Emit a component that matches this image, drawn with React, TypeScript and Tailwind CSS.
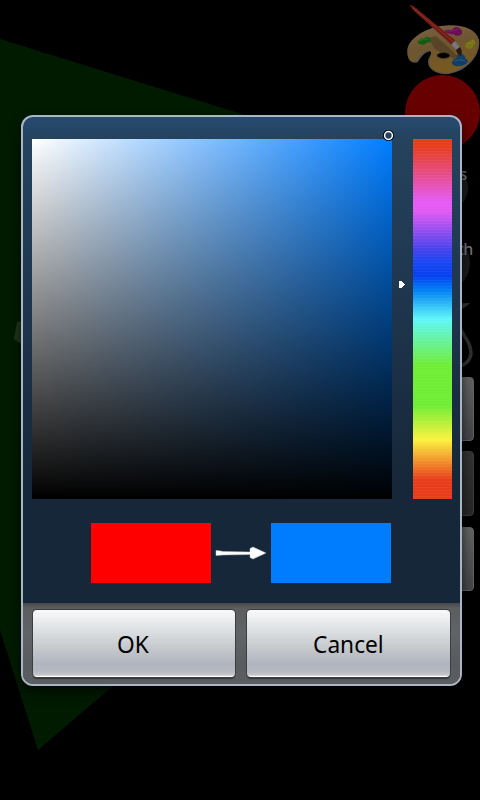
import React from 'react';

function PaletteIcon() {
  return (
    <svg className="block h-[75px] w-[75px]" viewBox="0 0 75 75">
      <defs>
        <linearGradient id="wood" x1="0" y1="0" x2="0.3" y2="1">
          <stop offset="0" stopColor="#7a6441" />
          <stop offset="0.5" stopColor="#6d5531" />
          <stop offset="1" stopColor="#79591f" />
        </linearGradient>
      </defs>
      <path d="M2.5 52 C2 43 14 30 36 26.500 C54 24 71 29 74 40 C76 52 66 70 44 74 C33 75 23 70 23 62 C23 58 27 54 26 52 C23 50 17 55 13 62 C9 64 2 62 2.500 52 Z" fill="#56534a" />
      <path d="M2.500 51 C2 42 14 30 36 26 C54 23 71 28 73.500 39 C75 51 65 67 45 72.500 C35 74 24.500 70 24.500 62 C24 58 28 53 25.500 51 C21 49 15 54 12 60 C8 63 2 60 2.500 51 Z" fill="url(#wood)" />
      <path d="M23 38 L31 36 L54 57 L49 59 L30 49 Z" fill="#4c3c24" opacity=".65" />
      <ellipse cx="38.500" cy="55.500" rx="6.500" ry="3" fill="#000" stroke="#453b2b" />
      <path d="M12.500 42 Q15 38 20 38 Q23 35 25 39 Q28 43 22 42.500 Q19 46 14 44 Z" fill="#125b13" />
      <path d="M14 41 Q18 38 23 39" fill="none" stroke="#438041" strokeWidth=".6" />
      <path d="M39 31 Q42 29 47 30 Q50 25 54 28 Q59 31 56 35 Q51 37 48 34 Q43 35 39 31 Z" fill="#6b0e58" />
      <path d="M41 31 Q48 32 53 29" fill="none" stroke="#873071" strokeWidth=".6" />
      <path d="M60 47 Q60 42 64 42 Q66 38 69 40 Q72 43 68 47 Q65 51 60 47 Z" fill="#777413" />
      <path d="M63 43 Q67 44 68 40" fill="none" stroke="#8d8942" strokeWidth=".6" />
      <path d="M47 62 Q49 58 52 58 Q51 53 57 54 Q61 56 60 58 Q65 60 61 64 Q54 68 48 65 Q46 63 47 62 Z" fill="#123f69" />
      <path d="M50 61 Q55 58 60 61" fill="none" stroke="#346184" strokeWidth=".7" />
      <path d="M4.500 5 Q8 5 11 8 L51 41 L47 45 L9 11 Z" fill="#701b13" />
      <path d="M8 8 L48.500 42" stroke="#93443a" strokeWidth=".6" />
      <path d="M46 45 L50 40.500 L55 47 L51 50 Z" fill="#71716f" />
      <path d="M48 43 L53 48.500" stroke="#999" strokeWidth=".7" />
      <path d="M51 50 L55 47 Q58 51 56 56 Q52 54 51 50 Z" fill="#28180f" />
    </svg>
  );
}

function BrushLabel({ text, round }: { text: string; round: string }) {
  return (
    <div className="relative flex h-[75px] justify-end">
      <div className={'absolute rounded-full bg-[#1c1c1c] ' + round} />
      <span className="relative pt-[14px] text-[16px] leading-[20px] tracking-[-0.3px] font-medium text-[#747474]">{text}</span>
    </div>
  );
}

function ToolSidebar() {
  return (
    <div className="ml-auto flex w-[75px] flex-col">
      <PaletteIcon />
      <div className="size-[75px] rounded-full bg-[#670000]" />
      <div className="pr-[13px]"><BrushLabel text="s" round="right-[-1px] top-[15px] size-[46px]" /></div>
      <div className="pr-[7px]"><BrushLabel text="th" round="right-[3px] top-[10px] size-[56px]" /></div>
      <svg className="block h-[75px] w-[75px]" viewBox="0 0 75 75">
        <path d="M50 3.500 L65 3 Q62 6 58 8.500 L50 9 Z" fill="#323232" />
        <path d="M50 21 Q57 31 60 37 Q66 45 66 54 Q65 62 56 66 Q48 69 40 66" fill="none" stroke="#303030" strokeWidth="3.500" />
      </svg>
      <div className="flex flex-col gap-[11px] pt-[2px] pr-[6px]">
        <div className="h-[64px] rounded-[4px] border border-[#606263] bg-linear-to-b from-[#626363] to-[#434548]" />
        <div className="-mt-px h-[65px] rounded-[4px] border border-[#3c3c3c] bg-linear-to-b from-[#333] to-[#272727]" />
        <div className="h-[64px] rounded-[4px] border border-[#606263] bg-linear-to-b from-[#626363] to-[#434548]" />
      </div>
    </div>
  );
}

function DialogButton({ label, width }: { label: string; width: string }) {
  return (
    <button className={'h-[67px] rounded-[4px] bg-[linear-gradient(180deg,#f8f9fa_0%,#e2e5e7_25%,#c5c9cc_57%,#b1b5bf_80%,#b5b8c0_91%,#c6c8cb_97.500%,#fff_98.500%)] text-[24px] leading-none text-black shadow-[0_0_0_1px_#3b3d3e,0_2px_1px_#363839] ' + width}>
      <span className="inline-block scale-x-[0.945]">{label}</span>
    </button>
  );
}

function ColorDialog() {
  return (
    <div className="flex h-[571px] w-[441px] flex-col overflow-hidden rounded-[12px] border-2 border-[#aab6c4] bg-[linear-gradient(180deg,#264a70_0px,#25425e_22px,#213b54_120px,#1b2f45_265px,#152738_370px)] shadow-[0_6px_12px_#000a]">
      <div className="flex pt-[22px] pl-[9px]">
        <div className="relative size-[360px] bg-[linear-gradient(0deg,#000,transparent),linear-gradient(90deg,#fff,#007dff)]">
          <svg className="absolute top-[-9px] left-[351px] size-[11px]" viewBox="0 0 11 11">
            <circle cx="5.500" cy="5.500" r="4.900" fill="none" stroke="#000" strokeWidth="1.300" />
            <circle cx="5.500" cy="5.500" r="3.900" fill="none" stroke="#fff" strokeWidth="1.500" />
          </svg>
        </div>
        <svg className="mt-[142px] ml-[7px] h-[7px] w-[6px]" viewBox="0 0 6 7">
          <path d="M0 0H3V1H4V2H5V3H6V4H5V5H4V6H3V7H0Z" fill="#fff" shapeRendering="crispEdges" />
        </svg>
        <div className="ml-[8px] h-[360px] w-[39px] bg-[repeating-linear-gradient(180deg,#ffffff0a_0px,#ffffff0a_1px,transparent_1px,transparent_3px),linear-gradient(180deg,#e73e16_0%,#e73e1c_2%,#e55bf4_17.4%,#e35af3_20%,#4342ec_31%,#1c47f3_34%,#0740f1_38%,#0080f5_42%,#5ff7f8_50%,#70ed35_63%,#70ed35_74%,#fbf33f_83.500%,#e83d1c_94.700%,#e83c1c_100%)]" />
      </div>
      <div className="mt-[24px] flex h-[60px] items-center pl-[68px]">
        <div className="h-[60px] w-[120px] bg-[#ff0000]" />
        <svg className="h-[60px] w-[60px]" viewBox="0 0 60 60">
          <path d="M5 27.500 Q8 27.500 12 28.500 L39 29 L39 25.500 L42 24 L55 30 L42 36 L39 34.500 L39 31.500 L12 32 L5 32.500 Z" fill="#fff" stroke="#bec4c9" strokeWidth=".5" />
        </svg>
        <div className="h-[60px] w-[120px] bg-[#007dff]" />
      </div>
      <div className="mt-[20px] flex flex-1 gap-[12px] bg-[linear-gradient(180deg,#464849_0px,#5b5d5f_5px,#616467_30px,#595c5e_60px,#5b5e60_100%)] pt-[7px] pl-[10px]">
        <DialogButton label="OK" width="w-[202px] pr-[2px]" />
        <DialogButton label="Cancel" width="w-[203px]" />
      </div>
    </div>
  );
}

export default function App() {
  return (
    <main className="relative h-[800px] w-[480px] overflow-hidden bg-black font-['Noto_Sans','Open_Sans',sans-serif]">
      <svg className="absolute inset-0 h-full w-full" viewBox="0 0 480 800">
        <path d="M0 39 L245 115 L400 400 L38 750 L0 630 Z" fill="#001b00" />
        <path d="M113 686 L38 750 L20 690 L80 640 Z" fill="#001b00" />
        <path d="M17 322 L30 319 L30 350 L14 339 Z" fill="#21351f" />
      </svg>
      <div className="relative"><ToolSidebar /></div>
      <div className="absolute inset-0 flex justify-center pt-[115px] pl-[3px]">
        <ColorDialog />
      </div>
    </main>
  );
}
